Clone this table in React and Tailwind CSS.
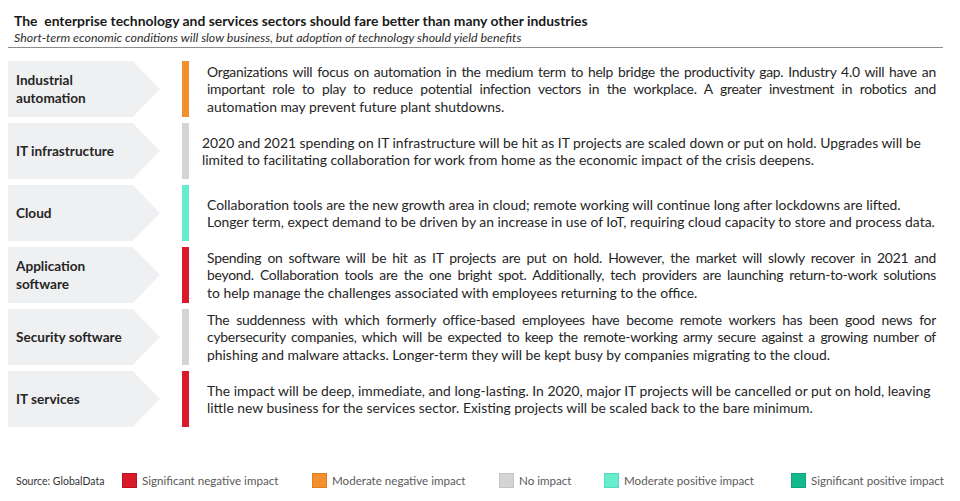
import React from 'react';

// Impact colours used for the bars and the legend
const IMPACT = {
  sigNeg: 'bg-[#d91a2a] border-[#b8141f]',
  modNeg: 'bg-[#f2902e] border-[#e07d1c]',
  none: 'bg-[#d4d4d4] border-[#c4c4c4]',
  modPos: 'bg-[#67eccd] border-[#52dcbb]',
  sigPos: 'bg-[#12b98c] border-[#0ea47c]',
};

const BAR = {
  sigNeg: 'bg-[#d91a2a]',
  modNeg: 'bg-[#f2902e]',
  none: 'bg-[#d4d4d4]',
  modPos: 'bg-[#67eccd]',
  sigPos: 'bg-[#12b98c]',
};

// Each line is given as in the source slide; j = justified line
const rows = [
  {
    label: ['Industrial', 'automation'],
    impact: 'modNeg',
    lines: [
      { t: 'Organizations will focus on automation in the medium term to help bridge the productivity gap. Industry 4.0 will have an', j: true },
      { t: 'important role to play to reduce potential infection vectors in the workplace. A greater investment in robotics and', j: true },
      { t: 'automation may prevent future plant shutdowns.' },
    ],
  },
  {
    label: ['IT infrastructure'],
    impact: 'none',
    gap: 'ml-[13px]',
    lines: [
      { t: '2020 and 2021 spending on IT infrastructure will be hit as IT projects are scaled down or put on hold. Upgrades will be' },
      { t: 'limited to facilitating collaboration for work from home as the economic impact of the crisis deepens.' },
    ],
  },
  {
    label: ['Cloud'],
    impact: 'modPos',
    lines: [
      { t: 'Collaboration tools are the new growth area in cloud; remote working will continue long after lockdowns are lifted.' },
      { t: 'Longer term, expect demand to be driven by an increase in use of IoT, requiring cloud capacity to store and process data.' },
    ],
  },
  {
    label: ['Application', 'software'],
    impact: 'sigNeg',
    lines: [
      { t: 'Spending on software will be hit as IT projects are put on hold. However, the market will slowly recover in 2021 and', j: true },
      { t: 'beyond. Collaboration tools are the one bright spot. Additionally, tech providers are launching return-to-work solutions', j: true },
      { t: 'to help manage the challenges associated with employees returning to the office.' },
    ],
  },
  {
    label: ['Security software'],
    impact: 'none',
    lines: [
      { t: 'The suddenness with which formerly office-based employees have become remote workers has been good news for', j: true },
      { t: 'cybersecurity companies, which will be expected to keep the remote-working army secure against a growing number of', j: true },
      { t: 'phishing and malware attacks. Longer-term they will be kept busy by companies migrating to the cloud.' },
    ],
  },
  {
    label: ['IT services'],
    impact: 'sigNeg',
    lines: [
      { t: 'The impact will be deep, immediate, and long-lasting. In 2020, major IT projects will be cancelled or put on hold, leaving' },
      { t: 'little new business for the services sector. Existing projects will be scaled back to the bare minimum.' },
    ],
  },
];

const legend = [
  { key: 'sigNeg', label: 'Significant negative impact', w: 'w-[190px]' },
  { key: 'modNeg', label: 'Moderate negative impact', w: 'w-[187px]' },
  { key: 'none', label: 'No impact', w: 'w-[105px]' },
  { key: 'modPos', label: 'Moderate positive impact', w: 'w-[187px]' },
  { key: 'sigPos', label: 'Significant positive impact', w: '' },
];

function Row({ row }) {
  return (
    <div className="flex h-[56px] items-stretch">
      <div className="w-[152px] bg-[#eff0f2] [clip-path:polygon(0_0,82%_0,100%_50%,82%_100%,0_100%)] flex flex-col justify-center pl-[8px] text-[13.6px] leading-[18px] font-bold text-[#262626]">
        {row.label.map((l) => <span key={l}>{l}</span>)}
      </div>
      <div className={`ml-[22px] w-[7px] ${BAR[row.impact]}`} />
      <div className={`${row.gap ?? 'ml-[18px]'} w-[734px] flex flex-col justify-center text-[13.9px] leading-[17.5px] text-[#262626]`}>
        {row.lines.map((ln, i) => (
          <div
            key={i}
            className={ln.j ? 'text-justify [text-align-last:justify] w-[729px] tracking-[-0.25px]' : 'whitespace-nowrap'}
          >
            {ln.t}
          </div>
        ))}
      </div>
    </div>
  );
}

export default function App() {
  return (
    <div className="w-[960px] h-[501px] bg-white overflow-hidden font-['Lato',sans-serif]">
      <div className="px-[14px] pt-[12px]">
        <div className="text-[13.9px] leading-[18px] font-bold text-[#1a1a1a] whitespace-pre">
          The  enterprise technology and services sectors should fare better than many other industries
        </div>
        <div className="text-[12.4px] leading-[15px] italic text-[#2e2e2e]">
          Short-term economic conditions will slow business, but adoption of technology should yield benefits
        </div>
      </div>
      <div className="ml-[8px] mt-[2px] w-[935px] border-t border-[#8c8c8c]" />

      <div className="flex flex-col gap-[6px] mt-[13px] pl-[8px]">
        {rows.map((r, i) => <Row key={i} row={r} />)}
      </div>

      <div className="flex items-center mt-[44px] pl-[16px]">
        <span className="w-[106px] text-[10.5px] text-[#333] pt-[3px]">Source: GlobalData</span>
        {legend.map((l) => (
          <div key={l.key} className={`flex items-center gap-[5px] ${l.w}`}>
            <span className={`w-[15px] h-[15px] border ${IMPACT[l.key]}`} />
            <span className="text-[11.6px] text-[#5a5a5a]">{l.label}</span>
          </div>
        ))}
      </div>
    </div>
  );
}
